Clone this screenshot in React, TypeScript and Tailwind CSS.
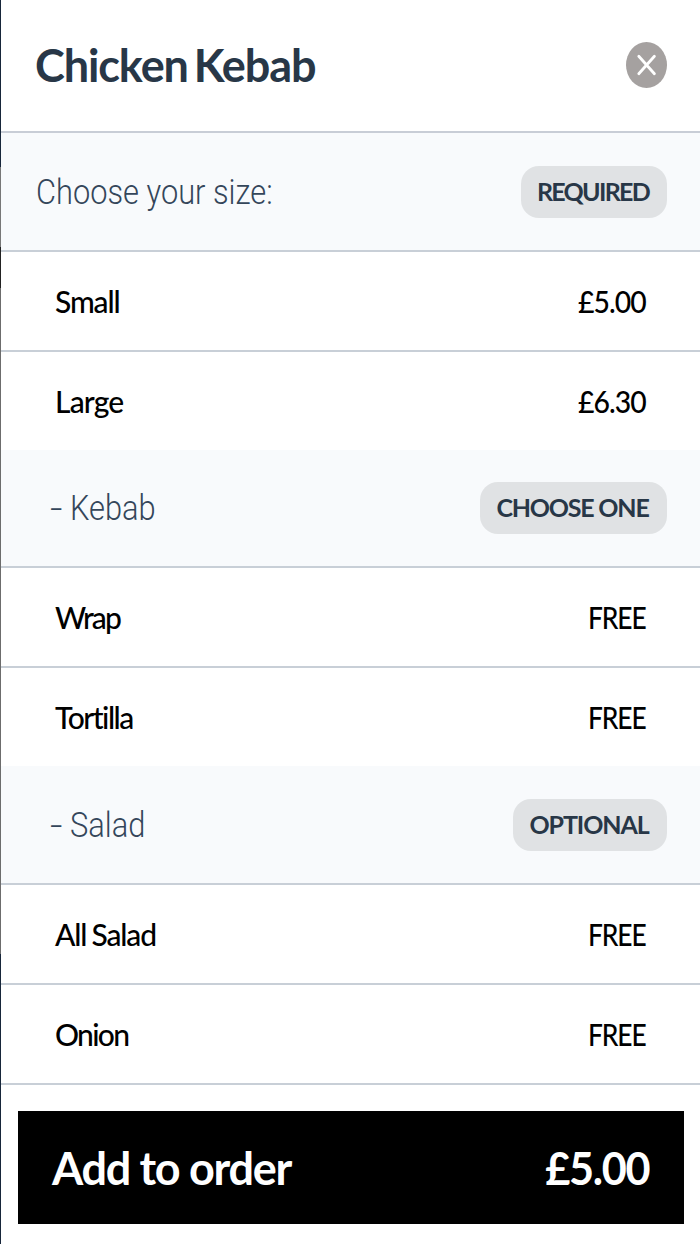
type Option = { name: string; tracking: string; price: string };

type Group = {
  title: string;
  dash?: boolean;
  badge: string;
  badgeClass: string;
  headClass: string;
  lastClass: string;
  priceClass: string;
  options: Option[];
};

const groups: Group[] = [
  {
    title: "Choose your size:",
    badge: "REQUIRED",
    badgeClass: "w-[146px] tracking-[-1.7px]",
    headClass: "h-[119px] pl-[35px]",
    lastClass: "h-[98px]",
    priceClass: "scale-x-[0.945] tracking-[-1px]",
    options: [
      { name: "Small", tracking: "tracking-[-1.1px]", price: "£5.00" },
      { name: "Large", tracking: "tracking-[-0.8px]", price: "£6.30" },
    ],
  },
  {
    title: "Kebab",
    dash: true,
    badge: "CHOOSE ONE",
    badgeClass: "w-[187px] tracking-[-1.2px]",
    headClass: "h-[118px] pl-[49px]",
    lastClass: "h-[98px]",
    priceClass: "scale-x-[0.88] tracking-[-1.2px]",
    options: [
      { name: "Wrap", tracking: "tracking-[-1.9px]", price: "FREE" },
      { name: "Tortilla", tracking: "tracking-[-1.5px]", price: "FREE" },
    ],
  },
  {
    title: "Salad",
    dash: true,
    badge: "OPTIONAL",
    badgeClass: "w-[154px] tracking-[-1.1px]",
    headClass: "h-[119px] pl-[49px]",
    lastClass: "h-[100px] border-b-2 border-[#c8cfd7]",
    priceClass: "scale-x-[0.88] tracking-[-1.2px]",
    options: [
      { name: "All Salad", tracking: "tracking-[-1.1px] [word-spacing:-1.5px]", price: "FREE" },
      { name: "Onion", tracking: "tracking-[-1.7px]", price: "FREE" },
    ],
  },
];

export default function App() {
  return (
    <main className="flex h-[1244px] w-[700px] overflow-hidden bg-white font-['Lato',sans-serif]">
      {/* Edge of the page behind the modal */}
      <div className="flex w-px shrink-0 flex-col">
        <div className="h-[167px] bg-[#17263a]" />
        <div className="h-[80px] bg-[#777777]" />
        <div className="h-[41px] bg-[#222222]" />
        <div className="h-[666px] bg-[#6c6c6c]" />
        <div className="flex-1 bg-[#17263a]" />
      </div>

      <div className="flex flex-1 flex-col">
        <header className="flex h-[133px] items-center justify-between border-b-2 border-[#c8cdd6] pr-[33px] pb-px pl-[34px]">
          <h1 className="text-[45px] leading-none font-bold tracking-[-1.1px] text-[#283747] [word-spacing:-4px]">
            Chicken Kebab
          </h1>
          <button aria-label="Close" className="h-[46px] w-[41px]">
            <svg viewBox="0 0 41 46" className="h-full w-full">
              <ellipse cx="20.5" cy="23" rx="20.5" ry="23" fill="#a5a1a0" />
              <path d="M12.8 14.3 L28.4 31.7 M28.4 14.3 L12.8 31.7" stroke="#fff" strokeWidth="2.8" strokeLinecap="round" />
            </svg>
          </button>
        </header>

        {groups.map((group) => (
          <section key={group.title}>
            <div
              className={`flex items-center justify-between border-b-2 border-[#c8cfd7] bg-[#f8fafc] pr-[33px] ${group.headClass}`}
            >
              <h2 className="flex pt-px font-['Roboto',sans-serif] text-[35px] leading-none font-light text-[#34465a]">
                {group.dash && <span className="w-[20px] origin-left scale-x-125">-</span>}
                <span className="origin-left scale-x-[0.88]">{group.title}</span>
              </h2>
              <span
                className={`flex h-[52px] items-center justify-center rounded-[18px] bg-[#e0e2e4] pr-[2px] text-[25px] font-bold text-[#283747] ${group.badgeClass}`}
              >
                {group.badge}
              </span>
            </div>
            {group.options.map((option, i) => (
              <div
                key={option.name}
                className={`flex items-center justify-between px-[54px] text-[30px] leading-none font-medium text-black ${
                  i === 0 ? "h-[100px] border-b-2 border-[#c8cfd7]" : group.lastClass
                }`}
              >
                <span className={option.tracking}>{option.name}</span>
                <span className={`origin-right ${group.priceClass}`}>{option.price}</span>
              </div>
            ))}
          </section>
        ))}

        <footer className="pt-[26px] pr-4 pl-[17px]">
          <button className="flex h-[113px] w-full items-center justify-between bg-black pt-px pr-[35px] pl-[34px] text-[45px] leading-none font-bold text-white">
            <span className="tracking-[-1.3px]">Add to order</span>
            <span className="origin-right scale-x-[0.96] tracking-[-1.4px]">£5.00</span>
          </button>
        </footer>
      </div>
    </main>
  );
}
